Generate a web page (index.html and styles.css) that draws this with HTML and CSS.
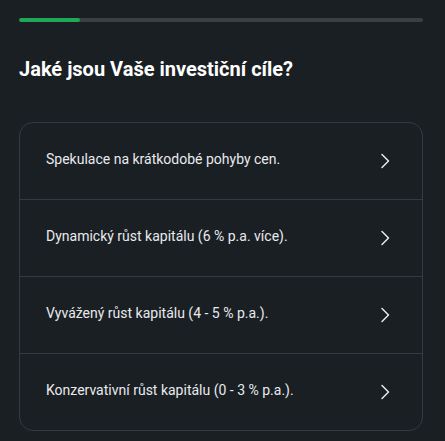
FILE: index.html
```html
<!DOCTYPE html>
<html lang="cs">
<head>
<meta charset="utf-8">
<link rel="stylesheet" href="styles.css">
</head>
<body>
<div class="page">
  <div class="progress"><div class="progress-fill" style="width: 15%"></div></div>
  <h1 class="title">Jaké jsou Vaše investiční cíle?</h1>
  <div class="card">
    <div class="option"><span class="label">Spekulace na krátkodobé pohyby cen.</span><svg class="chev" width="10" height="16" viewBox="0 0 10 16"><path d="M2 1.5 L8.5 8 L2 14.5" fill="none" stroke="#e8eaed" stroke-width="1.5" stroke-linecap="round" stroke-linejoin="round"/></svg></div>
    <div class="option"><span class="label">Dynamický růst kapitálu (6 % p.a. více).</span><svg class="chev" width="10" height="16" viewBox="0 0 10 16"><path d="M2 1.5 L8.5 8 L2 14.5" fill="none" stroke="#e8eaed" stroke-width="1.5" stroke-linecap="round" stroke-linejoin="round"/></svg></div>
    <div class="option"><span class="label">Vyvážený růst kapitálu (4 - 5 % p.a.).</span><svg class="chev" width="10" height="16" viewBox="0 0 10 16"><path d="M2 1.5 L8.5 8 L2 14.5" fill="none" stroke="#e8eaed" stroke-width="1.5" stroke-linecap="round" stroke-linejoin="round"/></svg></div>
    <div class="option"><span class="label">Konzervativní růst kapitálu (0 - 3 % p.a.).</span><svg class="chev" width="10" height="16" viewBox="0 0 10 16"><path d="M2 1.5 L8.5 8 L2 14.5" fill="none" stroke="#e8eaed" stroke-width="1.5" stroke-linecap="round" stroke-linejoin="round"/></svg></div>
  </div>
</div>
</body>
</html>
```
FILE: styles.css
```css
html, body {
  margin: 0;
  padding: 0;
  background: #1a1f24;
  font-family: Roboto, "Liberation Sans", Arial, sans-serif;
  color: #e8eaed;
}
.page {
  padding: 18px 22px 0 19px;
  width: 404px;
}
.progress {
  height: 4px;
  background: #3a3f44;
  border-radius: 2px;
  overflow: hidden;
}
.progress-fill {
  height: 100%;
  background: #1fa85a;
  border-radius: 2px;
}
.title {
  margin: 33px 0 0 0;
  font-size: 20px;
  line-height: 28px;
  font-weight: 700;
  color: #ffffff;
}
.card {
  margin-top: 39px;
  border: 1px solid #343a40;
  border-radius: 14px;
  display: flex;
  flex-direction: column;
}
.option {
  height: 76px;
  display: flex;
  align-items: center;
  justify-content: space-between;
  padding: 0 32px 0 26px;
  border-top: 1px solid #343a40;
}
.option:first-child {
  border-top: none;
}
.label {
  font-size: 14px;
  line-height: 20px;
  padding-bottom: 5px;
}
.chev {
  display: block;
}
```
